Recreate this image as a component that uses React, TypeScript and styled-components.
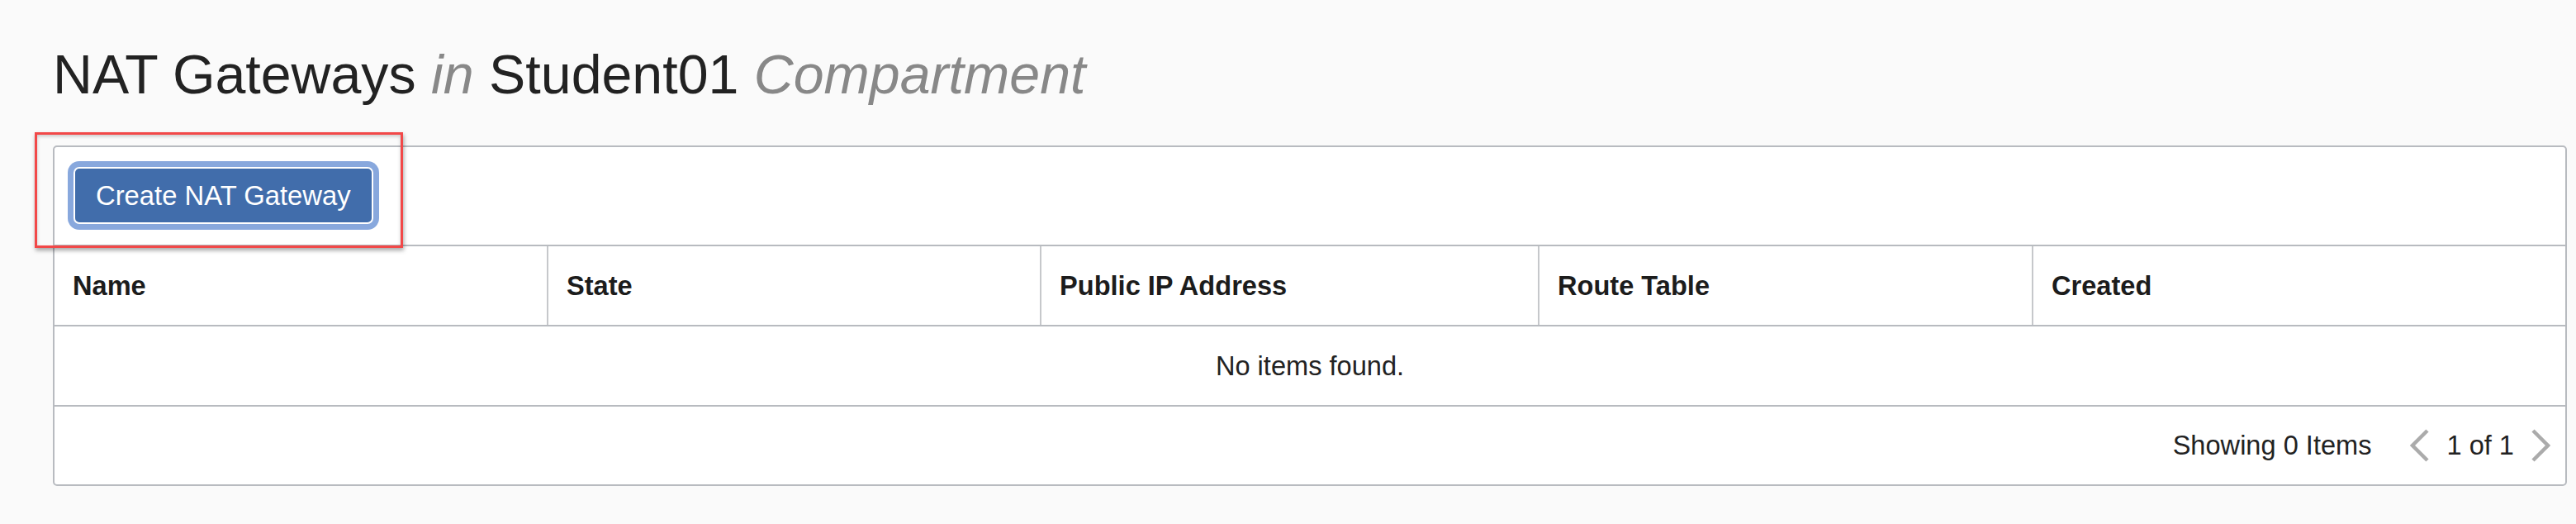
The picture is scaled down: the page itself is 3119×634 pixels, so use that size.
import React from "react";
import styled, { createGlobalStyle } from "styled-components";

// 표 컬럼 정의
const columns = [
  { label: "Name", width: "598px" },
  { label: "State", width: "597px" },
  { label: "Public IP Address", width: "603px" },
  { label: "Route Table", width: "598px" },
  { label: "Created", width: "1fr" },
];

const Chevron = ({ dir }: { dir: "left" | "right" }) => (
  <svg width="26" height="42" viewBox="0 0 26 42">
    <polyline
      points={dir === "left" ? "22,3 4,21 22,39" : "4,3 22,21 4,39"}
      fill="none"
      stroke="#ababab"
      strokeWidth="4.5"
    />
  </svg>
);

const App = () => {
  return (
    <Page>
      <GlobalStyle />
      <Title>
        NAT Gateways <Muted>in</Muted> Student01 <Muted>Compartment</Muted>
      </Title>
      <Panel>
        <Toolbar>
          <PrimaryButton>Create NAT Gateway</PrimaryButton>
        </Toolbar>
        <HeaderRow cols={columns.map((c) => c.width).join(" ")}>
          {columns.map((c) => (
            <HeaderCell key={c.label}>{c.label}</HeaderCell>
          ))}
        </HeaderRow>
        <EmptyRow>No items found.</EmptyRow>
        <Footer>
          <span>Showing 0 Items</span>
          <Pager>
            <PagerArrow>
              <Chevron dir="left" />
            </PagerArrow>
            <span>1 of 1</span>
            <PagerArrow>
              <Chevron dir="right" />
            </PagerArrow>
          </Pager>
        </Footer>
      </Panel>
      <Callout />
    </Page>
  );
};

export default App;

const GlobalStyle = createGlobalStyle`
  html, body {
    margin: 0;
    padding: 0;
    background: #fafafa;
  }
  body {
    font-family: "Liberation Sans", Arial, sans-serif;
    color: #222;
  }
`;

const Page = styled.main`
  position: relative;
  padding: 57px 11px 60px 64px;
`;

const Title = styled.h1`
  margin: 0 0 53px;
  font-size: 66.3px;
  line-height: 66px;
  font-weight: normal;
  color: #222;
  white-space: nowrap;
`;

const Muted = styled.em`
  color: #888;
  font-style: italic;
`;

const Panel = styled.section`
  background: #fff;
  border: 2px solid #b8bbc0;
  border-radius: 5px;
  font-size: 32.6px;
`;

const Toolbar = styled.div`
  display: flex;
  align-items: center;
  padding: 24px 23px 25px;
  border-bottom: 2px solid #b8bbc0;
`;

const PrimaryButton = styled.button`
  height: 69px;
  padding: 0 25px;
  border: 2px solid #fff;
  border-radius: 7px;
  background: #416dab;
  color: #fff;
  font-family: "Liberation Sans", Arial, sans-serif;
  font-size: 32.8px;
  box-shadow: 0 0 0 7px #88a8dd;
  cursor: pointer;
`;

const HeaderRow = styled.div<{ cols: string }>`
  display: grid;
  grid-template-columns: ${(p) => p.cols};
  height: 95px;
  border-bottom: 2px solid #b8bbc0;
`;

const HeaderCell = styled.div`
  display: flex;
  align-items: center;
  padding: 0 22px;
  font-weight: bold;
  color: #1c1c1c;
  border-right: 2px solid #c6c8cb;
  &:last-child {
    border-right: 0;
  }
`;

const EmptyRow = styled.div`
  display: flex;
  align-items: center;
  justify-content: center;
  height: 95px;
  border-bottom: 2px solid #b8bbc0;
`;

const Footer = styled.div`
  display: flex;
  align-items: center;
  justify-content: flex-end;
  gap: 46px;
  height: 94px;
  padding: 0 17px 0 0;
`;

const Pager = styled.div`
  display: flex;
  align-items: center;
  gap: 19px;
`;

const PagerArrow = styled.span`
  display: flex;
  align-items: center;
`;

const Callout = styled.div`
  position: absolute;
  left: 42px;
  top: 160px;
  width: 446px;
  height: 140px;
  box-sizing: border-box;
  border: 3px solid #f24848;
  box-shadow: 1px 3px 5px rgba(0, 0, 0, 0.35), inset 0 2px 4px rgba(0, 0, 0, 0.2);
  pointer-events: none;
`;
